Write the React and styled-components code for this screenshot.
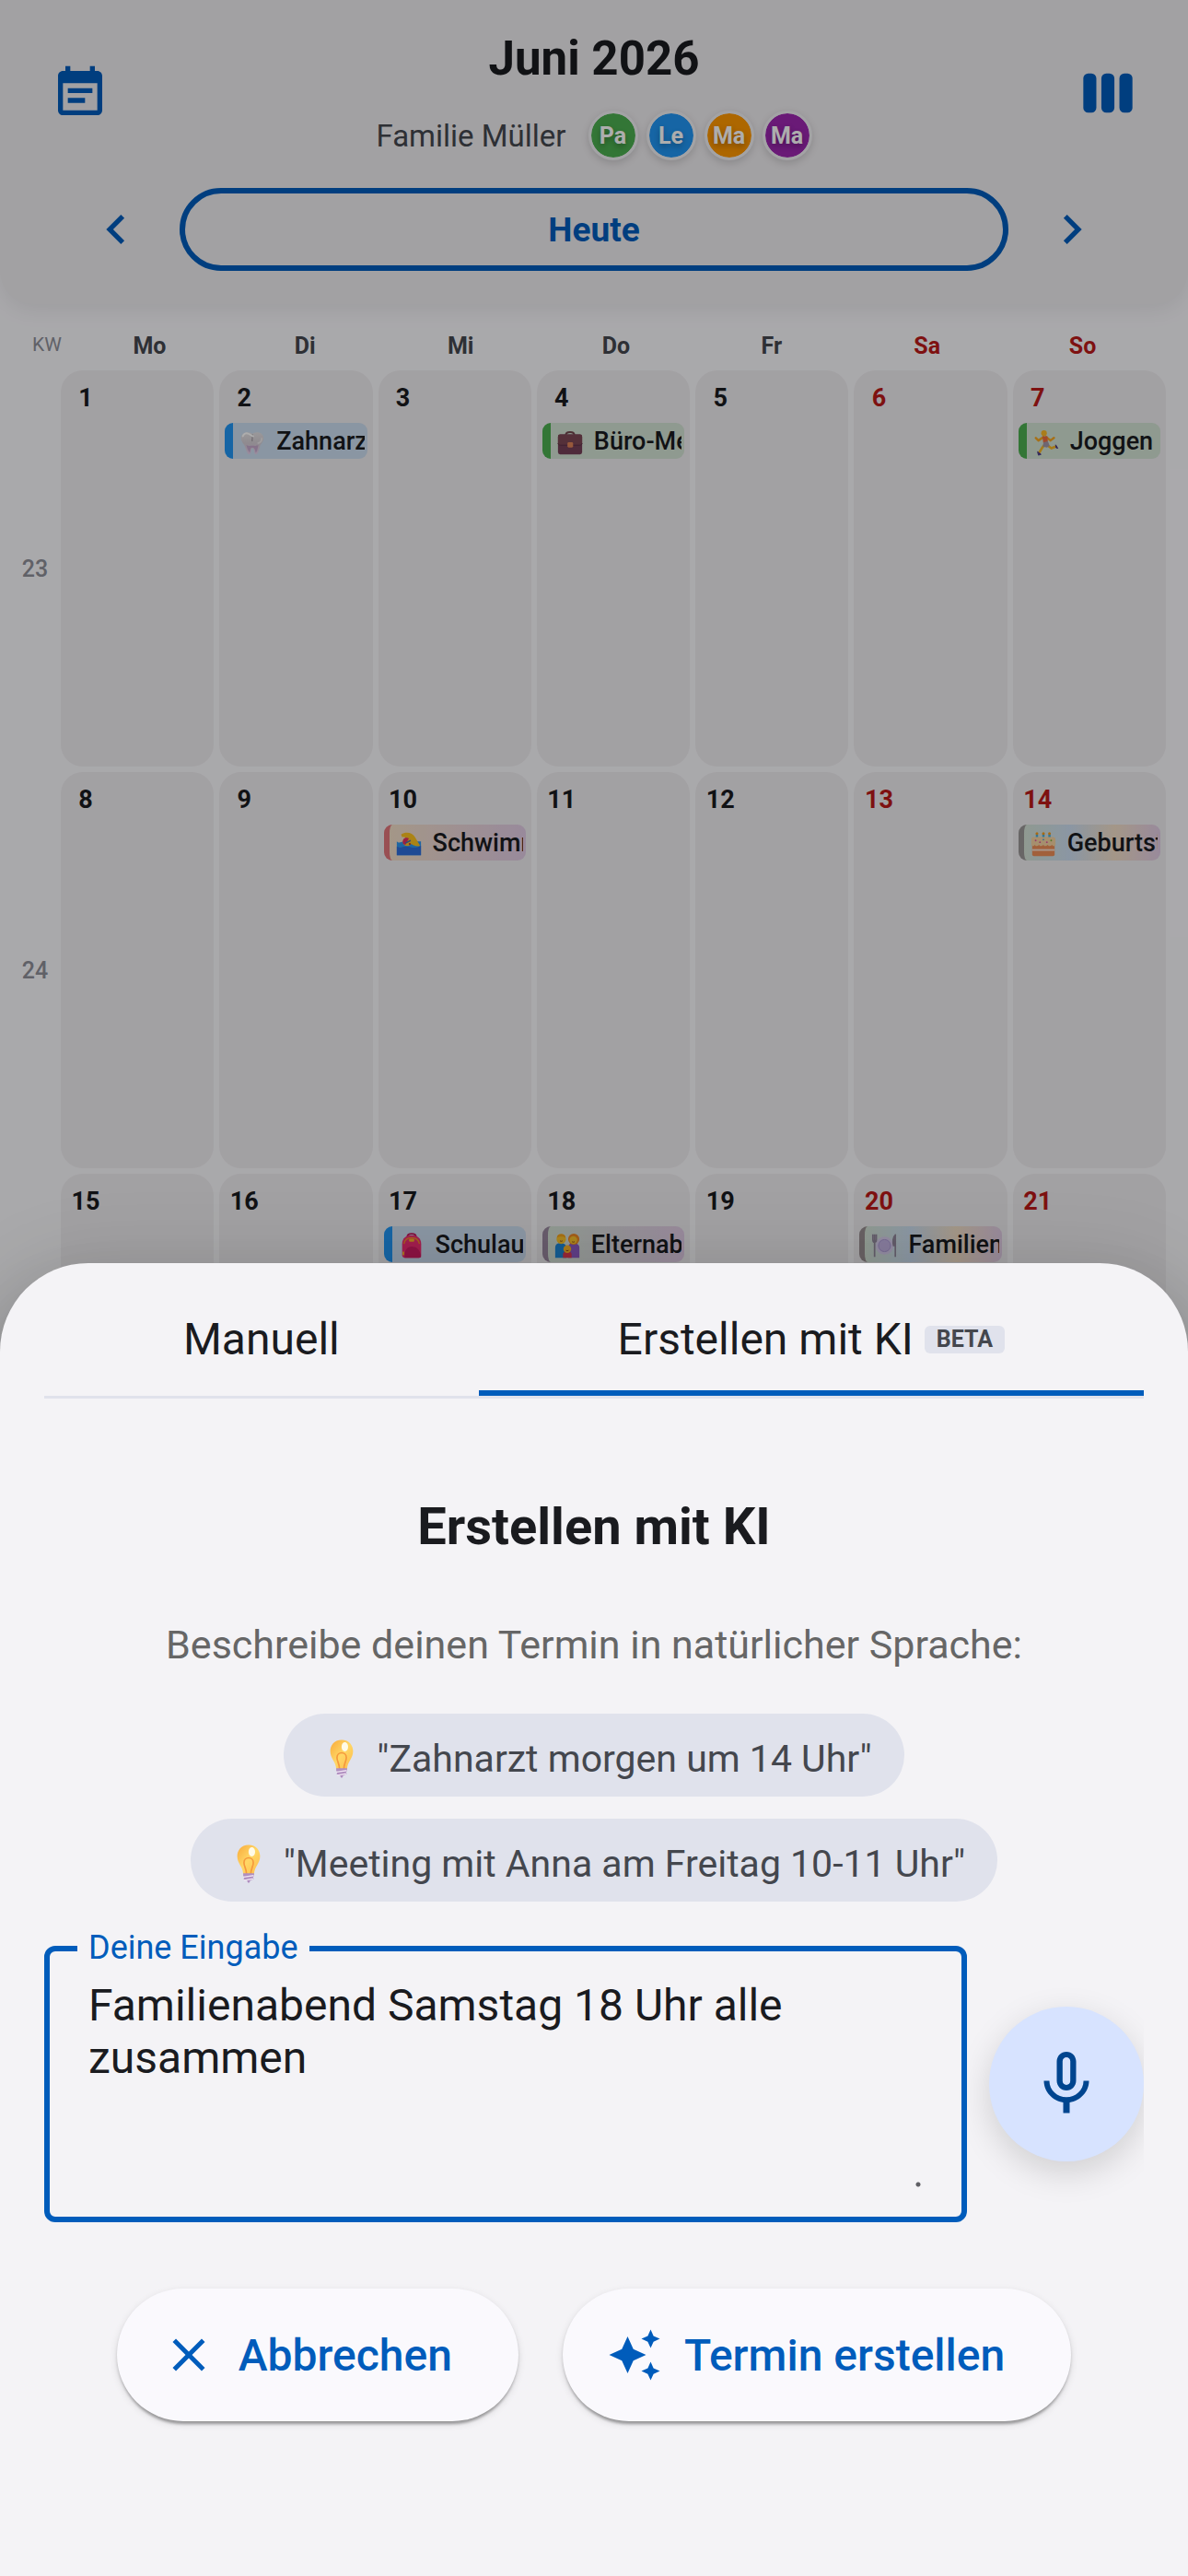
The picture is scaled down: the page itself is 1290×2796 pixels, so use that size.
import { useState } from "react";
import styled, { createGlobalStyle } from "styled-components";

const GlobalStyle = createGlobalStyle`
  * {
    box-sizing: border-box;
  }
  body {
    margin: 0;
    background-color: #faf9fd;
    color: #1a1b1f;
    font-family: Roboto, sans-serif;
  }
  button, textarea {
    font-family: inherit;
  }
  h1, h2, p {
    margin: 0;
  }
  svg {
    flex: none;
  }
`;

const Page = styled.div`
  height: 100vh;
  overflow: hidden;
  position: relative;
`;

const Header = styled.header`
  display: flex;
  flex-direction: column;
  gap: 30px;
  padding: 28px 54px 36px;
  background-color: #efedf0;
  border-radius: 0 0 36px 36px;
  box-shadow: 0 6px 24px rgba(0, 0, 0, 0.08);
`;

const HeaderTop = styled.div`
  display: flex;
  align-items: center;
  justify-content: space-between;
`;

const HeaderText = styled.div`
  display: flex;
  flex-direction: column;
  align-items: center;
  gap: 20px;
`;

const Title = styled.h1`
  font-size: 51px;
  line-height: 72px;
  font-weight: 700;
`;

const Family = styled.div`
  display: flex;
  align-items: center;
  gap: 24px;
  font-size: 33px;
  color: #44474e;
`;

const Avatars = styled.div`
  display: flex;
  gap: 9px;
`;

const Avatar = styled.span`
  width: 54px;
  height: 54px;
  display: flex;
  align-items: center;
  justify-content: center;
  border: 3px solid #f1f0f4;
  border-radius: 50%;
  background-color: ${(props) => props.$color};
  background-clip: padding-box;
  box-shadow: 0 3px 9px rgba(0, 0, 0, 0.15);
  color: white;
  font-size: 25px;
  font-weight: 700;
  text-shadow: 0 3px 6px rgba(0, 0, 0, 0.3);
`;

const IconButton = styled.button`
  width: ${(props) => props.$width || 66}px;
  height: 66px;
  display: flex;
  align-items: center;
  justify-content: center;
  padding: 0;
  border: none;
  background: none;
  color: #005cbb;
  cursor: pointer;
`;

const MonthNav = styled.nav`
  display: flex;
  align-items: center;
  gap: 9px;
  padding: 0 12px;
`;

const TodayButton = styled.button`
  flex: 1;
  height: 90px;
  border: 6px solid #005cbb;
  border-radius: 45px;
  background: none;
  color: #005cbb;
  font-size: 37px;
  font-weight: 700;
  cursor: pointer;
`;

const Weekdays = styled.div`
  display: grid;
  grid-template-columns: 54px repeat(7, 1fr);
  align-items: start;
  padding: 28px 30px 8px 24px;
  text-align: center;
`;

const Weekday = styled.span`
  font-size: 25px;
  line-height: 36px;
  font-weight: 700;
  color: ${(props) => (props.$weekend ? "#ba1a1a" : "#44474e")};
`;

const WeekLabel = styled.span`
  font-size: 21px;
  line-height: 33px;
  color: #8e9099;
`;

const Week = styled.div`
  display: grid;
  grid-template-columns: 44px repeat(7, minmax(0, 1fr));
  gap: 6px;
  padding: 0 24px 6px 16px;
`;

const WeekNumber = styled.span`
  align-self: center;
  text-align: center;
  font-size: 25px;
  font-weight: 500;
  color: #8e9099;
`;

const Day = styled.div`
  min-height: 430px;
  padding: 6px;
  border-radius: 24px;
  background-color: #efedf0;
`;

const DayNumber = styled.span`
  display: block;
  width: 42px;
  margin-bottom: 3px;
  line-height: 48px;
  text-align: center;
  font-size: 27px;
  font-weight: 700;
  color: ${(props) => (props.$weekend ? "#ba1a1a" : "#1a1b1f")};
`;

const EventChip = styled.div`
  height: 39px;
  padding: 0 3px 0 6px;
  border-left: ${(props) => (props.$shared ? 6 : 9)}px solid ${(props) => props.$edge};
  border-radius: 9px;
  background: ${(props) => props.$fill};
`;

const EventText = styled.span`
  display: flex;
  align-items: center;
  gap: 11px;
  overflow: hidden;
  white-space: nowrap;
  font-size: 27px;
  line-height: 41px;
  font-weight: 500;
`;

const Scrim = styled.div`
  position: absolute;
  inset: 0;
  display: flex;
  flex-direction: column;
  justify-content: flex-end;
  background-color: rgba(0, 0, 0, 0.32);
`;

const Sheet = styled.section`
  padding: 0 48px 168px;
  border-radius: 96px 96px 0 0;
  background-color: #f4f3f6;
  box-shadow: 0 24px 30px -15px rgba(0, 0, 0, 0.2),
    0 48px 72px 6px rgba(0, 0, 0, 0.14), 0 18px 90px 15px rgba(0, 0, 0, 0.12);
`;

const Tabs = styled.div`
  display: flex;
  border-bottom: 3px solid #e0e2ec;
`;

const Tab = styled.button`
  flex: 1 1 auto;
  height: 144px;
  display: flex;
  align-items: center;
  justify-content: center;
  gap: 12px;
  padding: 27px 72px 0;
  border: none;
  border-bottom: 6px solid ${(props) => (props.$active ? "#005cbb" : "transparent")};
  background: none;
  color: #1a1b1f;
  font-size: 48px;
  cursor: pointer;
`;

const Beta = styled.span`
  padding: 0 13px;
  border-radius: 6px;
  background-color: #e0e2ec;
  color: #44474e;
  font-size: 25px;
  line-height: 30px;
  font-weight: 700;
`;

const Intro = styled.div`
  display: flex;
  flex-direction: column;
  align-items: center;
  padding: 103px 0 48px;
`;

const SheetTitle = styled.h2`
  margin-bottom: 62px;
  font-size: 56px;
  line-height: 72px;
  font-weight: 700;
`;

const Hint = styled.p`
  margin-bottom: 45px;
  font-size: 43px;
  line-height: 60px;
  color: #666;
`;

const Examples = styled.div`
  display: flex;
  flex-direction: column;
  align-items: center;
  gap: 24px;
`;

const Example = styled.button`
  height: 90px;
  display: flex;
  align-items: center;
  gap: 16px;
  padding: 7px 35px 0 41px;
  border: none;
  border-radius: 45px;
  background-color: #e0e2ec;
  color: #44474e;
  font-size: 41px;
  cursor: pointer;
`;

const InputRow = styled.div`
  display: flex;
  align-items: center;
  gap: 24px;
  overflow-x: clip;
`;

const Field = styled.div`
  flex: 1;
  display: flex;
  position: relative;
  padding: 30px 42px;
  border: 6px solid #005cbb;
  border-radius: 12px;
`;

const FieldLabel = styled.label`
  position: absolute;
  top: -25px;
  left: 30px;
  padding: 0 12px;
  background-color: #f4f3f6;
  color: #005cbb;
  font-size: 36px;
  line-height: 42px;
`;

const TextArea = styled.textarea`
  width: 100%;
  padding: 0;
  border: none;
  outline: none;
  resize: vertical;
  background: none;
  color: #1a1b1f;
  font-size: 48px;
  line-height: 57px;
  &::-webkit-resizer {
    background: radial-gradient(circle at 10px 10px, #5f5f64 2px, transparent 3px);
  }
`;

const MicButton = styled.button`
  flex: none;
  width: 168px;
  height: 168px;
  display: flex;
  align-items: center;
  justify-content: center;
  padding: 0;
  border: none;
  border-radius: 50%;
  background-color: #d7e3ff;
  color: #00458f;
  box-shadow: 0 12px 36px rgba(0, 0, 0, 0.15);
  cursor: pointer;
`;

const Actions = styled.div`
  display: flex;
  justify-content: center;
  gap: 48px;
  margin-top: 72px;
`;

const ActionButton = styled.button`
  height: 144px;
  display: flex;
  align-items: center;
  gap: 24px;
  padding: 0 72px 0 48px;
  border: none;
  border-radius: 72px;
  background-color: #faf9fd;
  color: #005cbb;
  font-size: 48px;
  font-weight: 500;
  box-shadow: 0 6px 3px -3px rgba(0, 0, 0, 0.2), 0 3px 3px rgba(0, 0, 0, 0.14),
    0 3px 9px rgba(0, 0, 0, 0.12);
  cursor: pointer;
`;

const icons = {
  eventNote: (
    <path d="M19 3h-1V1h-2v2H8V1H6v2H5c-1.11 0-1.99.9-1.99 2L3 19c0 1.1.89 2 2 2h14c1.1 0 2-.9 2-2V5c0-1.1-.9-2-2-2zm0 16H5V8h14v11zM17 10H7v2h10v-2zm-3 4H7v2h7v-2z" />
  ),
  left: <path d="M15.41 7.41 14 6l-6 6 6 6 1.41-1.41L10.83 12z" />,
  right: <path d="M10 6 8.59 7.41 13.17 12l-4.58 4.59L10 18l6-6z" />,
  columns: (
    <>
      <rect x="2" y="4" width="5.3" height="16" rx="2" />
      <rect x="9.35" y="4" width="5.3" height="16" rx="2" />
      <rect x="16.7" y="4" width="5.3" height="16" rx="2" />
    </>
  ),
  mic: (
    <path d="M12 14c1.66 0 2.99-1.34 2.99-3L15 5c0-1.66-1.34-3-3-3S9 3.34 9 5v6c0 1.66 1.34 3 3 3zm-1.2-9.1c0-.66.54-1.2 1.2-1.2.66 0 1.2.54 1.2 1.2l-.01 6.2c0 .66-.53 1.2-1.19 1.2-.66 0-1.2-.54-1.2-1.2V4.9zm6.5 6.1c0 3-2.54 5.1-5.3 5.1S6.7 14 6.7 11H5c0 3.41 2.72 6.23 6 6.72V21h2v-3.28c3.28-.48 6-3.3 6-6.72h-1.7z" />
  ),
  close: (
    <path d="M19 6.41 17.59 5 12 10.59 6.41 5 5 6.41 10.59 12 5 17.59 6.41 19 12 13.41 17.59 19 19 17.59 13.41 12z" />
  ),
  sparkle: (
    <path d="m19 9 1.25-2.75L23 5l-2.75-1.25L19 1l-1.25 2.75L15 5l2.75 1.25L19 9zm-7.5.5L9 4 6.5 9.5 1 12l5.500 2.500L9 20l2.500-5.500L17 12l-5.500-2.500zM19 15l-1.250 2.750L15 19l2.750 1.250L19 23l1.250-2.750L23 19l-2.750-1.250L19 15z" />
  ),
};

const Icon = ({ name, size = 64 }) => (
  <svg width={size} height={size} viewBox="0 0 24 24" fill="currentColor" aria-hidden="true">
    {icons[name]}
  </svg>
);

const pictures = {
  tooth: (
    <>
      <linearGradient id="tooth" x1="0" y1="0" x2="0" y2="1">
        <stop offset="0" stopColor="#e4e1e4" />
        <stop offset="0.5" stopColor="#d3ccd3" />
        <stop offset="1" stopColor="#e3cdea" />
      </linearGradient>
      <path
        d="M16 6.5C13 3 3 3.500 3 11.500c0 4 3 6 4 8.500 1.500 4 3 10 5.500 10 2.500 0 1.500-7 3.800-7s1.200 7 3.700 7 4-6 5-10c1-2.500 4-4.500 4-8.500 0-8-10-8.500-13-5z"
        fill="url(#tooth)"
      />
      <path d="M9 19c2 2 5 1 7 1s5 1 7-1c-1 5-1.500 8-3 9-1-3-1-6-4-6s-2 4-3 6c-2-2-3-5-4-9z" fill="#b98fc2" opacity=".6" />
      <path d="M16 7c1 3-1 5 0 8" fill="none" stroke="#aaa3aa" strokeWidth="1.500" />
      <path d="M5 9c1-3 4-4 6-3 3 1 4 3 6 3" fill="none" stroke="#fff" strokeWidth="2" strokeLinecap="round" />
      <path d="M27 11c0 4-2 6-5 6" fill="none" stroke="#fff" strokeWidth="2" opacity=".5" />
    </>
  ),
  briefcase: (
    <>
      <path d="M11 8c0-5 10-5 10 0" fill="none" stroke="#70454c" strokeWidth="2" />
      <rect x="2" y="7" width="28" height="23" rx="2.500" fill="#754058" />
      <path d="M2 9.500A2.500 2.500 0 0 1 4.500 7h23A2.500 2.500 0 0 1 30 9.500V16c0 2-1 3-3 3H5c-2 0-3-1-3-3z" fill="#7d4754" />
      <path d="M2 17c0 1.500 1.500 2.500 3 2.500h22c1.500 0 3-1 3-2.500" fill="none" stroke="#5c3045" />
      <rect x="13" y="16" width="6.500" height="6" rx="1.500" fill="#df8358" />
    </>
  ),
  runner: (
    <>
      <path d="M13 10 7 14l-3-3M16 10l5 4 4-3" fill="none" stroke="#f5a623" strokeWidth="2.600" strokeLinecap="round" strokeLinejoin="round" />
      <path d="m14 19-3 4-3 5M18 20l4 3 5-2" fill="none" stroke="#f5b526" strokeWidth="2.800" strokeLinecap="round" strokeLinejoin="round" />
      <path d="M11.500 9h6l.5 8-5 2z" fill="#ee6c3f" />
      <path d="m13 16 5-1 2 5-3 2-5-1z" fill="#a297a8" />
      <circle cx="13.500" cy="5.500" r="3.300" fill="#fbb829" />
      <path d="m6 27 4 3-3 1zM27 19l2.500 4-2-.5z" fill="#4b3a86" stroke="#4b3a86" />
    </>
  ),
  swimmer: (
    <>
      <path d="M2 13c3 3 5 0 8 0h20v16H2z" fill="#2f97ef" />
      <path d="M7 5C13 1 20 3 23 8l6 10c-5 2-9-1-12-3-2-5-4-7-9-7z" fill="#fcc21f" />
      <circle cx="14" cy="13.500" r="5" fill="#f9bd2e" />
      <path d="M9 15c-1-5 3-7.500 7-5.500L12 17c-1 0-2.500-.5-3-2z" fill="#e32f64" />
      <path d="m12 15 6-3" stroke="#4a6fae" strokeWidth="1.500" />
      <circle cx="17" cy="16" r="1.200" fill="#c0392b" />
      <path d="M2 19c5 3 7-1 12 0s9 3 16-1v11H2z" fill="#2e6ddb" />
    </>
  ),
  cake: (
    <>
      <path d="M8.500 5v5M16 5v5M23 5v5" stroke="#44aee0" strokeWidth="2.600" />
      <circle cx="8.500" cy="4" r="1.600" fill="#f59b1d" />
      <circle cx="16" cy="4" r="1.600" fill="#f59b1d" />
      <circle cx="23" cy="4" r="1.600" fill="#f59b1d" />
      <rect x="3" y="14" width="26" height="16" rx="2" fill="#ee8e58" />
      <rect x="3" y="22" width="26" height="2" fill="#f8e0cf" />
      <path d="M2 11c0-2 1-3 3-3h22c2 0 3 1 3 3v6c-1 2-3 2-4 0-2 2-4 2-5 0-2 2-4 2-5 0-2 2-4 2-5 0-2 2-4 2-5 0-1 2-3 2-4 0z" fill="#f5d3a2" />
      <g fill="#e0559a">
        <circle cx="7" cy="12" r="1" />
        <circle cx="20" cy="14" r="1" />
        <circle cx="12" cy="14" r="1" />
      </g>
      <circle cx="16" cy="11" r="1" fill="#4aa3dd" />
      <circle cx="25" cy="12" r="1" fill="#7cb342" />
    </>
  ),
  backpack: (
    <>
      <path d="M11 6c0-5 10-5 10 0" fill="none" stroke="#c2185b" strokeWidth="2" />
      <path d="M5 14C5 7 10 4 16 4s11 3 11 10v13c0 2-1 3-3 3H8c-2 0-3-1-3-3z" fill="#ef2f74" />
      <path d="M7 14c1-5 4-7 9-7s8 2 9 7" fill="none" stroke="#f6892f" strokeWidth="1.500" />
      <rect x="13" y="8" width="6" height="3.500" rx="1" fill="#fbb22a" />
      <path d="M8 30c-1-9 3-13 8-13s10 3 11 12c-1 1-2 1-3 1z" fill="#d01d63" />
      <path d="M6.500 23v4" stroke="#fbb22a" strokeWidth="2" />
    </>
  ),
  family: (
    <>
      <path d="M2 30V18c0-3 2-5 6-5s7 2 7 5v12z" fill="#1e88d8" />
      <path d="M17 30V18c0-3 2-5 6-5s7 2 7 5v12z" fill="#8e5cc4" />
      <circle cx="23.500" cy="8.500" r="6.500" fill="#f08a24" />
      <circle cx="9" cy="8.500" r="5.500" fill="#fcc42c" />
      <circle cx="23" cy="9.500" r="4.500" fill="#fcc42c" />
      <path d="M4 7c0-6 10-6 10 0-3-2-7-2-10 0z" fill="#f5a51d" />
      <path d="M11 30v-4c0-2 2-4 5-4s5 2 5 4v4z" fill="#e03a52" />
      <circle cx="16" cy="20" r="4.500" fill="#fbb42a" />
      <path d="M7.500 10.500q1.500 1 3 0M21.500 11.500q1.500 1 3 0M14.500 21.500q1.500 1 3 0" fill="none" stroke="#8a4a1c" />
    </>
  ),
  plate: (
    <>
      <circle cx="16.500" cy="16" r="10.500" fill="#d8cdee" />
      <circle cx="16.500" cy="16" r="7" fill="#c6b5e6" stroke="#aa97d4" />
      <path d="M3 3v6c0 2 .5 3 2 3s2-1 2-3V3M5 3v26" fill="none" stroke="#92889c" strokeWidth="1.800" />
      <path d="M29 3v26M29 4c-3 2-3 8-2 12h2z" fill="#92889c" stroke="#92889c" strokeWidth="1.800" />
    </>
  ),
  bulb: (
    <>
      <linearGradient id="bulb" x1="0" y1="0" x2="1" y2="1">
        <stop offset="0" stopColor="#f8a93a" />
        <stop offset="0.5" stopColor="#ffd766" />
        <stop offset="1" stopColor="#fdbb4a" />
      </linearGradient>
      <path d="M16 1c-6 0-9 4.500-9 9 0 6 4.500 8 4.700 14h8.600c.2-6 4.700-8 4.700-14 0-4.500-3-9-9-9z" fill="url(#bulb)" />
      <path d="M14.300 24c0-4-2-6-2-9 0-5 7.400-5 7.400 0 0 3-2 5-2 9" fill="none" stroke="#f5983c" strokeWidth="1.200" />
      <ellipse cx="18.500" cy="6.500" rx="2.600" ry="3.600" fill="#fffbe8" />
      <path d="M11.700 23.500h8.600v2l-.8 1 .5 1.500-3 1.500c0 2-2 2-2 0L12 28l.6-1.500-.9-1z" fill="#b08fc0" />
      <path d="M12 26.500l8-1.200M12.500 29l7-1.200" stroke="#efe3f2" strokeWidth="1" />
    </>
  ),
};

const Picture = ({ name, size = 30 }) => (
  <svg width={size} height={size} viewBox="0 0 32 32" aria-hidden="true">
    {pictures[name]}
  </svg>
);

const members = [
  { name: "Pa", color: "#4caf50" },
  { name: "Le", color: "#2196f3" },
  { name: "Ma", color: "#ff9800" },
  { name: "Ma", color: "#9c27b0" },
];

const [green, blue, orange, purple] = members.map((m) => m.color);

const weekdays = ["Mo", "Di", "Mi", "Do", "Fr", "Sa", "So"];

const weeks = [
  { kw: 23, first: 1 },
  { kw: 24, first: 8 },
  { kw: 25, first: 15 },
];

const events = {
  2: { picture: "tooth", text: "Zahnarzt", colors: [blue], edge: blue },
  4: { picture: "briefcase", text: "Büro-Meeting", colors: [green], edge: green },
  7: { picture: "runner", text: "Joggen", colors: [green], edge: green },
  10: { picture: "swimmer", text: "Schwimmen", colors: [orange, purple], edge: "#e2757b" },
  14: { picture: "cake", text: "Geburtstag", colors: [green, blue, orange, purple], edge: "#9a9797" },
  17: { picture: "backpack", text: "Schulausflug", colors: [blue], edge: blue },
  18: { picture: "family", text: "Elternabend", colors: [green, purple], edge: "#9a88a0" },
  20: { picture: "plate", text: "Familienessen", colors: [green, blue, orange, purple], edge: "#9a9093" },
};

const fillOf = (colors) => {
  const tints = colors.map((c) => c + "2b");
  return tints.length === 1 ? tints[0] : `linear-gradient(90deg, ${tints.join(", ")})`;
};

const CalendarWeek = ({ kw, first }) => (
  <Week>
    <WeekNumber>{kw}</WeekNumber>
    {weekdays.map((name, i) => {
      const event = events[first + i];
      return (
        <Day key={name}>
          <DayNumber $weekend={i > 4}>{first + i}</DayNumber>
          {event && (
            <EventChip
              $shared={event.colors.length > 1}
              $edge={event.edge}
              $fill={fillOf(event.colors)}
            >
              <EventText>
                <Picture name={event.picture} />
                {event.text}
              </EventText>
            </EventChip>
          )}
        </Day>
      );
    })}
  </Week>
);

const CreateSheet = () => {
  const [tab, setTab] = useState("ki");
  const [text, setText] = useState("Familienabend Samstag 18 Uhr alle zusammen");

  return (
    <Sheet>
      <Tabs role="tablist">
        <Tab
          role="tab"
          aria-selected={tab === "manual"}
          $active={tab === "manual"}
          onClick={() => setTab("manual")}
        >
          Manuell
        </Tab>
        <Tab role="tab" aria-selected={tab === "ki"} $active={tab === "ki"} onClick={() => setTab("ki")}>
          Erstellen mit KI
          <Beta>BETA</Beta>
        </Tab>
      </Tabs>
      <Intro>
        <SheetTitle>Erstellen mit KI</SheetTitle>
        <Hint>Beschreibe deinen Termin in natürlicher Sprache:</Hint>
        <Examples>
          <Example onClick={() => setText("Zahnarzt morgen um 14 Uhr")}>
            <Picture name="bulb" size={44} />
            "Zahnarzt morgen um 14 Uhr"
          </Example>
          <Example onClick={() => setText("Meeting mit Anna am Freitag 10-11 Uhr")}>
            <Picture name="bulb" size={44} />
            "Meeting mit Anna am Freitag 10-11 Uhr"
          </Example>
        </Examples>
      </Intro>
      <InputRow>
        <Field>
          <FieldLabel htmlFor="prompt">Deine Eingabe</FieldLabel>
          <TextArea id="prompt" rows={4} value={text} onChange={(e) => setText(e.target.value)} />
        </Field>
        <MicButton aria-label="Spracheingabe">
          <Icon name="mic" size={84} />
        </MicButton>
      </InputRow>
      <Actions>
        <ActionButton>
          <Icon name="close" size={60} />
          Abbrechen
        </ActionButton>
        <ActionButton>
          <Icon name="sparkle" size={60} />
          Termin erstellen
        </ActionButton>
      </Actions>
    </Sheet>
  );
};

const App = () => {
  return (
    <Page>
      <GlobalStyle />
      <Header>
        <HeaderTop>
          <IconButton aria-label="Termine">
            <Icon name="eventNote" />
          </IconButton>
          <HeaderText>
            <Title>Juni 2026</Title>
            <Family>
              Familie Müller
              <Avatars>
                {members.map((m) => (
                  <Avatar key={m.color} $color={m.color}>
                    {m.name}
                  </Avatar>
                ))}
              </Avatars>
            </Family>
          </HeaderText>
          <IconButton aria-label="Ansicht">
            <Icon name="columns" />
          </IconButton>
        </HeaderTop>
        <MonthNav>
          <IconButton $width={120} aria-label="Zurück">
            <Icon name="left" />
          </IconButton>
          <TodayButton>Heute</TodayButton>
          <IconButton $width={120} aria-label="Weiter">
            <Icon name="right" />
          </IconButton>
        </MonthNav>
      </Header>
      <main>
        <Weekdays>
          <WeekLabel>KW</WeekLabel>
          {weekdays.map((name, i) => (
            <Weekday key={name} $weekend={i > 4}>
              {name}
            </Weekday>
          ))}
        </Weekdays>
        {weeks.map((week) => (
          <CalendarWeek key={week.kw} {...week} />
        ))}
      </main>
      <Scrim>
        <CreateSheet />
      </Scrim>
    </Page>
  );
};

export default App;
